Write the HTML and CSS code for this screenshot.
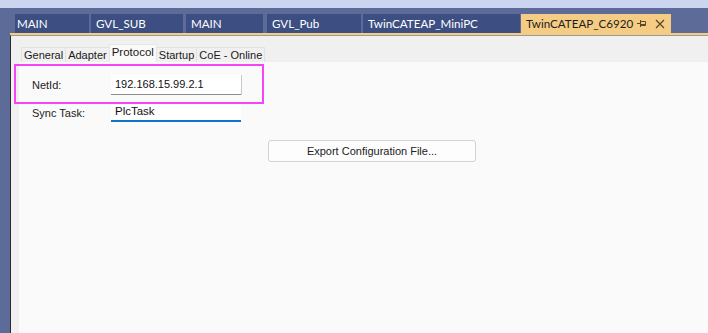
FILE: index.html
```html
<!DOCTYPE html>
<html>
<head>
<meta charset="utf-8">
<link rel="stylesheet" href="styles.css">
</head>
<body>
<div class="titlebar"></div>
<div class="tabstrip">
  <div class="doctab t1">MAIN</div>
  <div class="doctab t2">GVL_SUB</div>
  <div class="doctab t3">MAIN</div>
  <div class="doctab t4">GVL_Pub</div>
  <div class="doctab t5">TwinCATEAP_MiniPC</div>
  <div class="doctab active">
    <span class="tabtitle">TwinCATEAP_C6920</span>
    <svg class="pin" width="9" height="9" viewBox="0 0 9 9"><path d="M0 4.5H3M3.5 1V8M3.5 2.5H8.5V6.5H3.5M3.5 5.5H8.5" fill="none" stroke="#5b4a25" stroke-width="1"/></svg>
    <svg class="close" width="10" height="10" viewBox="0 0 10 10"><path d="M1 1L9 9M9 1L1 9" fill="none" stroke="#5b4a25" stroke-width="1.3"/></svg>
  </div>
</div>
<div class="docframe">
  <div class="propsheet">
    <div class="innertabs">
      <div class="itab">General</div>
      <div class="itab">Adapter</div>
      <div class="itab sel">Protocol</div>
      <div class="itab">Startup</div>
      <div class="itab">CoE - Online</div>
    </div>
    <div class="page">
      <div class="form">
        <div class="lbl">NetId:</div>
        <div class="field">192.168.15.99.2.1</div>
        <div class="lbl">Sync Task:</div>
        <div class="field focus">PlcTask</div>
      </div>
      <div class="btnrow"><div class="btn">Export Configuration File...</div></div>
      <div class="highlight"></div>
    </div>
  </div>
</div>
</body>
</html>
```
FILE: styles.css
```css
html, body {
  margin: 0;
  height: 100%;
}
body {
  background: #5d6b99;
  display: flex;
  flex-direction: column;
  overflow: hidden;
  font-family: "Liberation Sans", Arial, sans-serif;
}
.titlebar {
  height: 8px;
  background: #ccd5f0;
  flex: none;
}
.tabstrip {
  flex: none;
  display: flex;
  padding: 6px 0 0 15px;
  gap: 2px;
  height: 19px;
}
.doctab {
  height: 19px;
  box-sizing: border-box;
  background: #3d4f82;
  color: #ffffff;
  font-family: Lato, "Liberation Sans", sans-serif;
  font-size: 11.6px;
  line-height: 19px;
  padding-left: 2px;
  white-space: nowrap;
}
.t1 { width: 74px; }
.t2 { width: 92px; padding-left: 5px; }
.t3 { width: 77px; margin-left: 1px; padding-left: 5px; }
.t4 { width: 94px; margin-left: 2px; padding-left: 5px; }
.t5 { width: 157px; padding-left: 5px; }
.doctab.active {
  width: 150px;
  margin-left: -1px;
  background: #f5cc84;
  color: #1e1e1e;
  padding-left: 5px;
  display: flex;
  align-items: center;
}
.tabtitle { width: 108px; flex: none; }
.pin { margin-left: 3px; flex: none; }
.close { margin-left: 9px; flex: none; }
.docframe {
  flex: 1;
  margin-left: 10px;
  border-top: 2px solid #f5cc84;
  display: flex;
  flex-direction: column;
}
.propsheet {
  flex: 1;
  border-top: 1px solid #9a9a9a;
  border-left: 1px solid #2a2a2a;
  background: #f0f0f0;
  padding-left: 8px;
  display: flex;
  flex-direction: column;
}
.innertabs {
  display: flex;
  align-items: flex-end;
  padding: 8px 0 0 2px;
  height: 18px;
}
.itab {
  height: 15px;
  box-sizing: border-box;
  padding: 0 2px;
  font-size: 11px;
  line-height: 15px;
  color: #1a1a1a;
  background: #f0f0f0;
  border: 1px solid #e2e2e2;
  border-bottom: none;
  margin-right: -1px;
}
.itab.sel {
  height: 18px;
  line-height: 15px;
  background: #fafafa;
  border-color: #e6e6e6;
  position: relative;
  z-index: 1;
  font-size: 11.5px;
}
.page {
  flex: 1;
  background: #fafafa;
  position: relative;
}
.form {
  display: grid;
  grid-template-columns: 79px 130px;
  row-gap: 8px;
  padding: 13px 0 0 13px;
}
.lbl {
  font-size: 11px;
  color: #222;
  display: flex;
  align-items: center;
}
.field {
  height: 20px;
  box-sizing: border-box;
  background: #ffffff;
  border-bottom: 1px solid #8d8d8d;
  box-shadow: 1px 0 0 #c8c8c8;
  font-size: 11px;
  color: #111;
  padding-left: 4px;
  line-height: 19px;
}
.field.focus {
  height: 19px;
  border-bottom: 2px solid #0f74c9;
  box-shadow: none;
  line-height: 17px;
  font-size: 11.5px;
}
.btnrow {
  padding: 18px 0 0 249px;
}
.btn {
  width: 208px;
  height: 22px;
  box-sizing: border-box;
  border: 1px solid #d2d2d2;
  border-radius: 3px;
  background: #fdfdfd;
  font-size: 11px;
  color: #222;
  text-align: center;
  line-height: 20px;
}
.highlight {
  position: absolute;
  left: -5px;
  top: 2px;
  width: 250px;
  height: 40px;
  box-sizing: border-box;
  border: 2px solid #f446f4;
}
```
